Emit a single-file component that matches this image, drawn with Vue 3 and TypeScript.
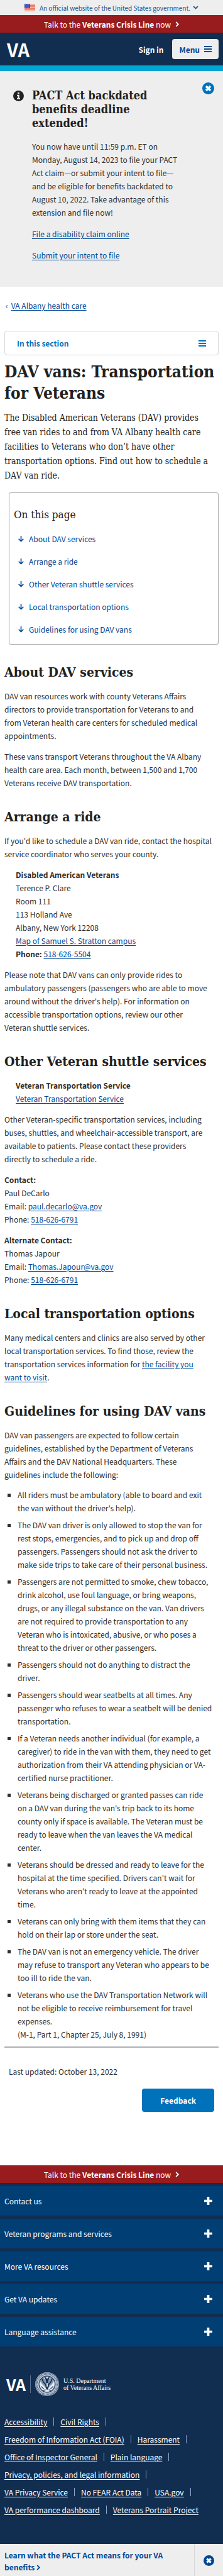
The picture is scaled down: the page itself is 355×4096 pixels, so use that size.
<script setup lang="ts">
interface PageLink {
  id: string
  label: string
}

const sections: PageLink[] = [
  { id: 'about', label: 'About DAV services' },
  { id: 'arrange', label: 'Arrange a ride' },
  { id: 'shuttles', label: 'Other Veteran shuttle services' },
  { id: 'local', label: 'Local transportation options' },
  { id: 'guidelines', label: 'Guidelines for using DAV vans' },
]

const guidelines: string[] = [
  "All riders must be ambulatory (able to board and exit the van without the driver's help).",
  'The DAV van driver is only allowed to stop the van for rest stops, emergencies, and to pick up and drop off passengers. Passengers should not ask the driver to make side trips to take care of their personal business.',
  'Passengers are not permitted to smoke, chew tobacco, drink alcohol, use foul language, or bring weapons, drugs, or any illegal substance on the van. Van drivers are not required to provide transportation to any Veteran who is intoxicated, abusive, or who poses a threat to the driver or other passengers.',
  'Passengers should not do anything to distract the driver.',
  'Passengers should wear seatbelts at all times. Any passenger who refuses to wear a seatbelt will be denied transportation.',
  'If a Veteran needs another individual (for example, a caregiver) to ride in the van with them, they need to get authorization from their VA attending physician or VA-certified nurse practitioner.',
  "Veterans being discharged or granted passes can ride on a DAV van during the van's trip back to its home county only if space is available. The Veteran must be ready to leave when the van leaves the VA medical center.",
  "Veterans should be dressed and ready to leave for the hospital at the time specified. Drivers can't wait for Veterans who aren't ready to leave at the appointed time.",
  'Veterans can only bring with them items that they can hold on their lap or store under the seat.',
  'The DAV van is not an emergency vehicle. The driver may refuse to transport any Veteran who appears to be too ill to ride the van.',
]

const footerPanels: string[] = [
  'Contact us',
  'Veteran programs and services',
  'More VA resources',
  'Get VA updates',
  'Language assistance',
]

const footerLinks: string[][] = [
  ['Accessibility', 'Civil Rights'],
  ['Freedom of Information Act (FOIA)', 'Harassment'],
  ['Office of Inspector General', 'Plain language'],
  ['Privacy, policies, and legal information'],
  ['VA Privacy Service', 'No FEAR Act Data', 'USA.gov'],
  ['VA performance dashboard', 'Veterans Portrait Project'],
]
</script>

<template>
  <div class="page">
    <header>
      <button class="gov" type="button">
        <svg class="flag" viewBox="0 0 20 14" aria-hidden="true">
          <rect width="20" height="14" fill="#fff" />
          <path d="M0 1h20M0 3h20M0 5h20M0 7h20M0 9h20M0 11h20M0 13h20" stroke="#db3e1f" stroke-width="1" />
          <rect width="10" height="8" fill="#1e33b1" />
          <path d="M1 2h8M2 4h6M1 6h8" stroke="#fff" stroke-width="1" stroke-dasharray="1 1" />
        </svg>
        <span>An official website of the United States government.</span>
        <svg class="gov-chevron" viewBox="0 0 10 7" aria-hidden="true">
          <path d="M1 1.2l4 4 4-4" fill="none" stroke="#205493" stroke-width="2" />
        </svg>
      </button>
      <a class="crisis" href="#crisis">
        <span>Talk to the <b>Veterans Crisis Line</b> now</span>
        <svg viewBox="0 0 6 10" aria-hidden="true">
          <path d="M1 1l4 4-4 4" fill="none" stroke="#fff" stroke-width="2" />
        </svg>
      </a>
      <div class="masthead">
        <a class="va" href="#home">VA</a>
        <a class="sign-in" href="#sign-in">Sign in</a>
        <button class="menu" type="button">
          Menu
          <svg viewBox="0 0 12 10" aria-hidden="true">
            <path d="M0 1h12M0 5h12M0 9h12" stroke="#004795" stroke-width="2" />
          </svg>
        </button>
      </div>
    </header>

    <section class="alert" aria-labelledby="alert-title">
      <svg class="info" viewBox="0 0 20 20" aria-hidden="true">
        <circle cx="10" cy="10" r="10" fill="#212121" />
        <path d="M8.3 3.4h3.2v2.8H8.3zM7.1 8h4.4v6h1.4v2.2H7.1V14h1.4v-3.8H7.1z" fill="#eee" />
      </svg>
      <div class="alert-body">
        <h2 id="alert-title">PACT Act backdated benefits deadline extended!</h2>
        <p>You now have until 11:59 p.m. ET on Monday, August 14, 2023 to file your PACT Act claim—or submit your intent to file—and be eligible for benefits backdated to August 10, 2022. Take advantage of this extension and file now!</p>
        <p><a href="#claim">File a disability claim online</a></p>
        <p><a href="#intent">Submit your intent to file</a></p>
      </div>
      <button class="close" type="button" aria-label="Close notice">
        <svg viewBox="0 0 20 20" aria-hidden="true">
          <circle cx="10" cy="10" r="10" fill="#0071bb" />
          <path d="M6.3 6.3l7.4 7.4M13.7 6.3l-7.4 7.4" stroke="#fff" stroke-width="3.6" />
        </svg>
      </button>
    </section>

    <main>
      <nav class="crumbs" aria-label="Breadcrumb">
        <span>‹</span>
        <a href="#albany">VA Albany health care</a>
      </nav>
      <button class="section-menu" type="button">
        In this section
        <svg viewBox="0 0 12 10" aria-hidden="true">
          <path d="M0 1h12M0 5h12M0 9h12" stroke="#0071bb" stroke-width="2" />
        </svg>
      </button>

      <h1>DAV vans: Transportation for Veterans</h1>
      <p class="intro">The Disabled American Veterans (DAV) provides free van rides to and from VA Albany health care facilities to Veterans who don’t have other transportation options. Find out how to schedule a DAV van ride.</p>

      <nav class="toc" aria-labelledby="toc-title">
        <h2 id="toc-title">On this page</h2>
        <ul>
          <li v-for="s in sections" :key="s.id">
            <a :href="'#' + s.id">
              <svg viewBox="0 0 10 11" aria-hidden="true">
                <path d="M5 0v9.5M.8 5.2L5 9.4l4.2-4.2" fill="none" stroke="#004795" stroke-width="1.8" />
              </svg>
              {{ s.label }}
            </a>
          </li>
        </ul>
      </nav>

      <article>
        <h2 id="about">About DAV services</h2>
        <p>DAV van resources work with county Veterans Affairs directors to provide transportation for Veterans to and from&nbsp;Veteran health care centers for scheduled medical appointments.</p>
        <p>These vans transport Veterans throughout the VA Albany health care area. Each month, between 1,500 and 1,700 Veterans receive DAV transportation.</p>

        <h2 id="arrange">Arrange a ride</h2>
        <p>If you'd like to schedule a DAV van ride, contact the hospital service coordinator who serves your county.</p>
        <p class="inset">
          <b>Disabled American Veterans</b><br />
          Terence P. Clare<br />
          Room 111<br />
          113 Holland Ave<br />
          Albany, New York 12208<br />
          <a href="#map">Map of Samuel S. Stratton campus</a><br />
          <b>Phone:</b> <a href="tel:5186265504">518-626-5504</a>
        </p>
        <p>Please note that DAV vans can only provide rides to ambulatory passengers (passengers who are able to move around without the driver's help). For information on accessible transportation options, review our other Veteran&nbsp;shuttle services.</p>

        <h2 id="shuttles">Other Veteran shuttle services</h2>
        <p class="inset">
          <b>Veteran Transportation Service</b><br />
          <a href="#vts">Veteran Transportation Service</a>
        </p>
        <p>Other Veteran-specific transportation services, including buses, shuttles, and wheelchair-accessible transport, are available to patients. Please contact these providers directly to schedule a ride.</p>
        <p>
          <b>Contact:</b><br />
          Paul DeCarlo<br />
          Email: <a href="mailto:paul.decarlo@va.gov">paul.decarlo@va.gov</a><br />
          Phone: <a href="tel:5186266791">518-626-6791</a>
        </p>
        <p>
          <b>Alternate Contact:</b><br />
          Thomas Japour<br />
          Email: <a href="mailto:Thomas.Japour@va.gov">Thomas.Japour@va.gov</a><br />
          Phone: <a href="tel:5186266791">518-626-6791</a>
        </p>

        <h2 id="local">Local transportation options</h2>
        <p>Many medical centers and clinics are also served by other local transportation services. To find those, review the transportation services information for <a href="#facility">the facility you want&nbsp;to visit</a>.</p>

        <h2 id="guidelines">Guidelines for using DAV vans</h2>
        <p>DAV van passengers are expected to follow certain guidelines, established by the Department of Veterans Affairs and the DAV National Headquarters. These guidelines include the following:</p>
        <ul class="rules">
          <li v-for="g in guidelines" :key="g">{{ g }}</li>
          <li>
            Veterans who use the DAV Transportation Network will not be eligible to receive reimbursement for travel expenses.<br />
            (M-1, Part 1, Chapter 25, July 8, 1991)
          </li>
        </ul>
      </article>

      <p class="updated">Last updated: October 13, 2022</p>
      <div class="feedback-row">
        <button class="feedback" type="button">Feedback</button>
      </div>
    </main>

    <footer>
      <a class="crisis" href="#crisis">
        <span>Talk to the <b>Veterans Crisis Line</b> now</span>
        <svg viewBox="0 0 6 10" aria-hidden="true">
          <path d="M1 1l4 4-4 4" fill="none" stroke="#fff" stroke-width="2" />
        </svg>
      </a>
      <div class="panels">
        <button v-for="p in footerPanels" :key="p" type="button">
          {{ p }}
          <svg viewBox="0 0 14 14" aria-hidden="true">
            <path d="M7 0v14M0 7h14" stroke="#fff" stroke-width="4" />
          </svg>
        </button>
      </div>
      <div class="brand">
        <span class="va small">VA</span>
        <span class="bar"></span>
        <svg class="seal" viewBox="0 0 44 44" aria-hidden="true">
          <circle cx="22" cy="22" r="22" fill="#c3cddb" />
          <circle cx="22" cy="22" r="20.8" fill="none" stroke="#112e51" stroke-width=".8" />
          <circle cx="22" cy="22" r="18.4" fill="none" stroke="#5d7290" stroke-width="2.6" stroke-dasharray="1.3 1" />
          <circle cx="22" cy="22" r="15.6" fill="#112e51" />
          <circle cx="22" cy="22" r="14.4" fill="#8595ab" />
          <path d="M8.8 16c3 5 6.5 9 11 13l2 3 2-3c5-4 8.5-8 11-13l1 6c-1.2 7-6 13.5-14 14-8-.5-13-7-14-14z" fill="#e6ebf2" />
          <path d="M13 12c1 5 4 9 7 11M31 12c-1 5-4 9-7 11M18 10l3 4M26 10l-3 4" fill="none" stroke="#112e51" stroke-width="2" />
          <path d="M22 12l2.5 3-1 3 2 5-1 6-2.5 4-2.5-4-1-6 2-5-1-3z" fill="#112e51" />
          <path d="M20.5 20h3l-.5 6-1 1.5-1-1.5z" fill="#dbe2ec" />
          <path d="M11 26l5 5M33 26l-5 5M15 34l4-2M29 34l-4-2" stroke="#33496b" stroke-width="1.5" />
          <circle cx="22" cy="9.5" r="1.2" fill="#fff" />
          <circle cx="17" cy="11" r="1" fill="#fff" />
          <circle cx="27" cy="11" r="1" fill="#fff" />
        </svg>
        <span class="dept">U.S. Department<br />of Veterans Affairs</span>
      </div>
      <nav class="links" aria-label="Footer">
        <div v-for="(row, r) in footerLinks" :key="r" class="link-row">
          <template v-for="(l, i) in row" :key="l">
            <a href="#footer">{{ l }}</a>
            <span v-if="r < footerLinks.length - 1 || i < row.length - 1" class="sep"></span>
          </template>
        </div>
      </nav>
    </footer>

    <aside class="promo">
      <a href="#pact">
        Learn what the PACT Act means for your VA benefits
        <svg viewBox="0 0 6 10" aria-hidden="true">
          <path d="M1 1l4 4-4 4" fill="none" stroke="#004795" stroke-width="2" />
        </svg>
      </a>
      <button class="close" type="button" aria-label="Dismiss">
        <svg viewBox="0 0 20 20" aria-hidden="true">
          <circle cx="10" cy="10" r="10" fill="#004795" />
          <path d="M6.3 6.3l7.4 7.4M13.7 6.3l-7.4 7.4" stroke="#fff" stroke-width="3.6" />
        </svg>
      </button>
    </aside>
  </div>
</template>

<style>
body {
  margin: 0;
}
</style>

<style scoped>
.page {
  background: #fff;
  color: #2e2e2e;
  font-family: "Noto Sans CJK KR", "Noto Sans", sans-serif;
  font-size: 12px;
  line-height: 21px;
}
h1,
h2,
p,
ul {
  margin: 0;
  padding: 0;
}
button {
  border: 0;
  padding: 0;
  background: none;
  font: inherit;
  cursor: pointer;
}
a {
  color: #004795;
  text-underline-offset: 2px;
}
svg {
  display: block;
  flex: none;
}
h1,
h2 {
  color: #212121;
  font-family: "DejaVu Serif Condensed", "DejaVu Serif", serif;
  font-weight: bold;
}
.gov {
  display: flex;
  align-items: center;
  justify-content: center;
  gap: 7px;
  width: 100%;
  height: 24px;
  background: #eee;
  color: #205493;
  font-size: 10px;
}
.flag {
  width: 17px;
  height: 12px;
}
.gov-chevron {
  width: 9px;
  height: 6px;
  margin-left: -3px;
}
.crisis {
  display: flex;
  align-items: center;
  justify-content: center;
  gap: 7px;
  height: 28px;
  background: #981b1e;
  color: #fff;
  text-decoration: none;
}
.crisis svg {
  width: 6px;
  height: 9px;
}
.masthead {
  display: flex;
  align-items: center;
  height: 52px;
  padding: 0 7px 0 11px;
  border-bottom: 9px solid #00a6d2;
  background: #112e51;
}
.va {
  margin-right: auto;
  color: #fff;
  font-size: 29px;
  font-weight: bold;
  line-height: 32px;
  text-decoration: none;
}
.sign-in {
  margin-right: 14px;
  color: #fff;
  font-weight: bold;
  text-decoration: none;
}
.menu {
  display: flex;
  align-items: center;
  gap: 7px;
  height: 32px;
  padding: 0 11px;
  border-radius: 4px;
  background: #eee;
  color: #004795;
  font-weight: bold;
}
.menu svg,
.section-menu svg {
  width: 12px;
  height: 10px;
}
.alert {
  display: flex;
  align-items: flex-start;
  gap: 13px;
  padding: 28px 14px 40px 21px;
  background: #eee;
}
.info {
  width: 17px;
  height: 17px;
  margin-top: 3px;
}
.alert-body {
  flex: 1;
  display: flex;
  flex-direction: column;
  gap: 13px;
  padding-right: 20px;
}
.alert-body h2 {
  margin-bottom: 2px;
  font-size: 18px;
  line-height: 22px;
}
.alert .close {
  margin-top: -10px;
}
.close svg {
  width: 19px;
  height: 19px;
}
main {
  padding: 19px 7px 0;
}
.crumbs {
  display: flex;
  gap: 5px;
  padding-left: 2px;
}
.section-menu {
  display: flex;
  align-items: center;
  justify-content: space-between;
  width: 100%;
  height: 39px;
  margin-top: 30px;
  padding: 0 19px;
  border: 1px solid #d6d7d9;
  border-radius: 4px;
  color: #0071bb;
  font-weight: bold;
}
h1 {
  margin-top: 9px;
  font-size: 26px;
  line-height: 34px;
}
.intro {
  margin-top: 11px;
  padding-right: 7px;
  color: #212121;
  font-family: "DejaVu Serif Condensed", "DejaVu Serif", serif;
  font-size: 14px;
  line-height: 23px;
}
.toc {
  margin: 15px 0 0 7px;
  padding: 21px 7px 13px;
  border: 1px solid #a6a8ab;
  border-radius: 3px;
}
.toc h2 {
  font-size: 17px;
  font-weight: normal;
  line-height: 26px;
}
.toc ul {
  display: flex;
  flex-direction: column;
  gap: 15px;
  margin-top: 15px;
  padding-left: 7px;
  list-style: none;
}
.toc a {
  display: flex;
  align-items: center;
  gap: 8px;
  text-decoration: none;
}
.toc svg {
  width: 9px;
  height: 10px;
}
article {
  padding-bottom: 9px;
  border-bottom: 2px solid #aeb0b5;
}
article h2 {
  margin: 31px 0 14px;
  font-size: 21px;
  line-height: 26px;
}
article p {
  padding-right: 9px;
}
article p + p {
  margin-top: 12px;
}
article .inset {
  padding-left: 18px;
}
.rules {
  display: flex;
  flex-direction: column;
  gap: 6px;
  margin-top: 11px;
  padding: 0 10px 0 21px;
  list-style: square;
}
.updated {
  margin: 27px 0 0 7px;
}
.feedback-row {
  display: flex;
  justify-content: flex-end;
  padding: 17px 7px 85px;
}
.feedback {
  height: 37px;
  padding: 0 29px;
  border-radius: 4px;
  background: #0071bb;
  color: #fff;
  font-weight: bold;
}
footer {
  background: #112e51;
}
.panels {
  display: flex;
  flex-direction: column;
  gap: 5px;
  padding-top: 5px;
}
.panels button {
  display: flex;
  align-items: center;
  justify-content: space-between;
  height: 47px;
  padding: 0 17px 0 7px;
  background: #003e73;
  color: #fff;
}
.panels svg {
  width: 13px;
  height: 13px;
}
.brand {
  display: flex;
  align-items: center;
  gap: 7px;
  margin-top: 41px;
  padding-left: 10px;
}
.va.small {
  margin-right: 0;
  font-size: 25px;
}
.bar {
  width: 1px;
  height: 28px;
  background: #5b7292;
}
.seal {
  width: 38px;
  height: 38px;
}
.dept {
  color: #fff;
  font-family: "Liberation Serif", serif;
  font-size: 10px;
  line-height: 11px;
}
.links {
  display: flex;
  flex-direction: column;
  gap: 7px;
  padding: 30px 7px 44px;
}
.link-row {
  display: flex;
  align-items: center;
  gap: 10px;
}
.links a {
  color: #fff;
}
.sep {
  width: 1px;
  height: 13px;
  background: #8ba6ca;
}
.promo {
  display: flex;
  height: 52px;
  background: #eee;
}
.promo a {
  flex: 1;
  padding: 8px 30px 0 7px;
  border-right: 1px solid #d6d7d9;
  font-weight: bold;
  line-height: 19px;
  text-decoration: none;
}
.promo a svg {
  display: inline-block;
  width: 6px;
  height: 9px;
}
.promo .close {
  display: flex;
  align-items: center;
  justify-content: center;
  width: 45px;
}
.promo .close svg {
  width: 17px;
  height: 17px;
}
</style>
